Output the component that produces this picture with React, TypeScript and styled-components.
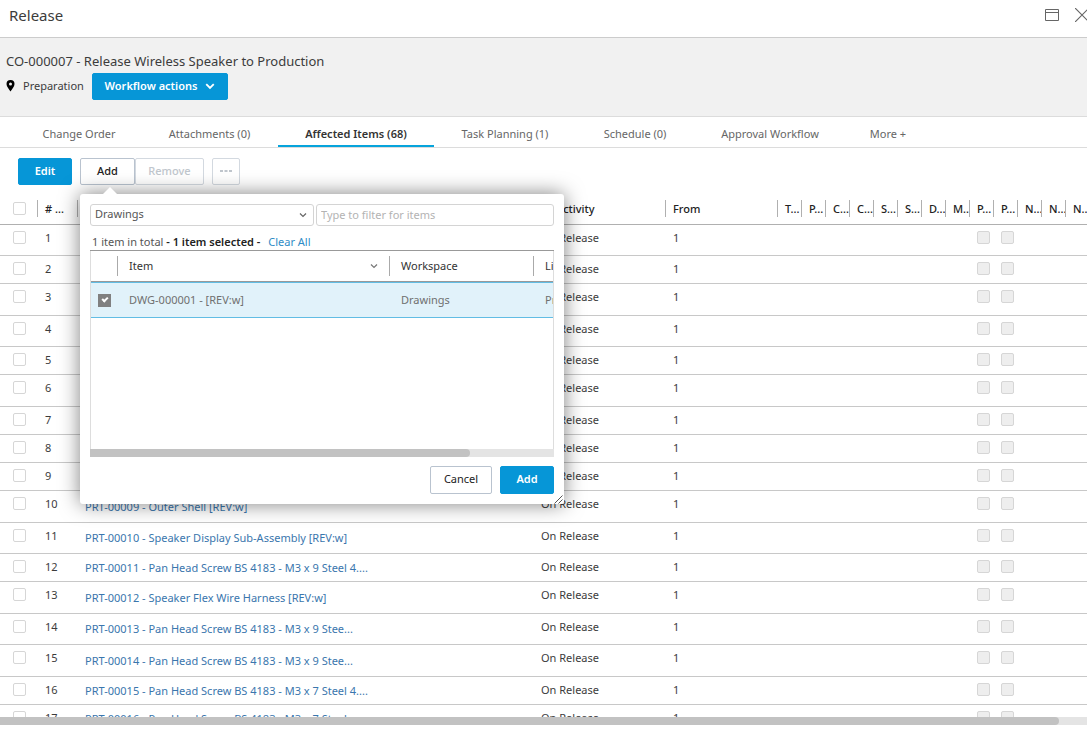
import React from "react";
import styled, { createGlobalStyle, css } from "styled-components";

const GlobalStyle = createGlobalStyle`
  *, *::before, *::after { box-sizing: border-box; }
  body {
    margin: 0;
    background: #fff;
    color: #3c3c3c;
    font-family: "Noto Sans", "Open Sans", sans-serif;
    font-size: 11px;
    line-height: 16px;
  }
  button, input, select { font: inherit; margin: 0; }
`;

const Page = styled.div`
  display: flex;
  flex-direction: column;
  height: 100vh;
  padding-bottom: 8px;
  overflow: hidden;
`;

/* ---------- title bar ---------- */

const TitleBar = styled.header`
  flex: none;
  display: flex;
  align-items: center;
  justify-content: space-between;
  height: 38px;
  padding-left: 9px;
  padding-bottom: 8px;
  border-bottom: 1px solid #ccc;
`;

const WindowTitle = styled.h1`
  margin: 0;
  font-size: 15px;
  line-height: 20px;
  font-weight: 400;
`;

const WindowControls = styled.div`
  display: flex;
  align-items: center;
  gap: 16px;
`;

const IconButton = styled.button`
  display: block;
  padding: 0;
  border: 0;
  background: none;
  color: #666;
  svg { display: block; }
`;

/* ---------- record summary ---------- */

const Summary = styled.section`
  flex: none;
  display: flex;
  flex-direction: column;
  gap: 2px;
  padding: 13px 6px 16px;
  background: #f1f1f1;
  border-bottom: 1px solid #dcdcdc;
`;

const RecordTitle = styled.h2`
  margin: 0;
  font-size: 13px;
  line-height: 20px;
  font-weight: 400;
`;

const StatusRow = styled.div`
  display: flex;
  align-items: center;
  gap: 8px;
`;

const Status = styled.span`
  display: flex;
  align-items: center;
  gap: 8px;
  min-width: 78px;
  padding-bottom: 2px;
  svg { display: block; }
`;

type Variant = "primary" | "outline" | "disabled";

const Button = styled.button<{ $variant: Variant; $width: number; $tall?: boolean }>`
  display: inline-flex;
  align-items: center;
  justify-content: center;
  gap: 8px;
  min-width: ${(p) => p.$width}px;
  height: ${(p) => (p.$tall ? 28 : 27)}px;
  padding: 0 0 2px;
  border-radius: 2px;
  border: 1px solid #b9c3cf;
  background: #fff;
  color: #222;
  ${(p) =>
    p.$variant === "primary" &&
    css`
      border-color: #0696d7;
      background: #0696d7;
      color: #fff;
      font-weight: 600;
    `}
  ${(p) =>
    p.$variant === "disabled" &&
    css`
      border-color: #d3d9e0;
      color: #c0c6cd;
    `}
`;

const StrongLabel = styled.span`
  font-weight: 500;
`;

/* ---------- tabs ---------- */

const Tabs = styled.nav`
  flex: none;
  display: grid;
  grid-template-columns: 124px 137px 156px 142px 118px 152px 84px;
  height: 31px;
  padding-left: 17px;
  border-bottom: 1px solid #dcdcdc;
`;

const Tab = styled.a<{ $active?: boolean }>`
  padding: 9px 0 3px;
  text-align: center;
  text-decoration: none;
  color: #666;
  border-bottom: 2px solid transparent;
  ${(p) =>
    p.$active &&
    css`
      color: #333;
      font-weight: 600;
      border-bottom-color: #06a4dc;
    `}
`;

/* ---------- toolbar ---------- */

const Toolbar = styled.div`
  flex: none;
  display: flex;
  gap: 8px;
  padding: 10px 18px 8px;
`;

const ButtonGroup = styled.div`
  position: relative;
  display: flex;
`;

/* ---------- picker popover ---------- */

const Popover = styled.section`
  position: absolute;
  z-index: 2;
  top: 36px;
  left: 0;
  display: flex;
  flex-direction: column;
  width: 484px;
  height: 310px;
  padding: 10px;
  border-radius: 3px;
  background: #fff;
  box-shadow: 0 0 20px rgba(0, 0, 0, 0.5);

  &::before {
    content: "";
    position: absolute;
    top: -7px;
    left: 23px;
    border: 7px solid transparent;
    border-top-width: 0;
    border-bottom-color: #fff;
  }
`;

const FilterRow = styled.div`
  display: grid;
  grid-template-columns: 224px 1fr;
  gap: 2px;
`;

const SelectBox = styled.div`
  display: grid;
  align-items: center;
  svg {
    grid-area: 1 / 1;
    justify-self: end;
    margin-right: 7px;
    color: #666;
    pointer-events: none;
  }
`;

const Select = styled.select`
  grid-area: 1 / 1;
  appearance: none;
  width: 100%;
  height: 22px;
  padding: 0 20px 2px 4px;
  border: 1px solid #d4d4d4;
  border-radius: 3px;
  background: #fff;
  color: #555;
`;

const FilterInput = styled.input`
  width: 100%;
  height: 22px;
  padding: 0 4px 2px;
  border: 1px solid #d4d4d4;
  border-radius: 3px;
  background: #fff;
  &::placeholder { color: #b3b3b3; }
`;

const SelectionInfo = styled.p`
  margin: 8px 0 0;
  padding-left: 2px;
  color: #555;
  strong {
    font-weight: 600;
    color: #222;
  }
  a { margin-left: 5px; }
`;

const Link = styled.a`
  color: #3a76ad;
  text-decoration: none;
`;

const ClearLink = styled(Link)`
  color: #2f8cc6;
`;

const PickerGrid = styled.div`
  flex: 1;
  display: flex;
  flex-direction: column;
  min-height: 0;
  border-top: 1px solid #999;
`;

const PickerViewport = styled.div`
  flex: 1;
  min-height: 0;
  overflow: hidden;
  border: solid #ddd;
  border-width: 0 1px;
`;

const PickerTable = styled.table`
  table-layout: fixed;
  width: 565px;
  border-spacing: 0;
`;

const PickerHead = styled.th<{ $first?: boolean }>`
  height: 31px;
  padding: 0;
  font-weight: 400;
  text-align: left;
  color: #333;
  border-bottom: 1px solid #999;
  > div {
    display: flex;
    align-items: center;
    justify-content: space-between;
    height: 20px;
    padding: 0 11px;
    border-left: ${(p) => (p.$first ? 0 : 1)}px solid #aaa;
  }
  svg { color: #777; }
`;

const PickerCell = styled.td`
  height: 36px;
  padding: 0 0 0 12px;
  color: #707070;
  background: #e1f2fa;
  border: solid #62bde4;
  border-width: 1px 0;
  &:first-child { padding-left: 7px; }
`;

const PickerActions = styled.div`
  display: flex;
  justify-content: flex-end;
  gap: 8px;
  margin-top: 9px;
`;

const ResizeGrip = styled.svg`
  position: absolute;
  right: 1px;
  bottom: 0;
`;

/* ---------- shared: checkbox and scrollbar ---------- */

const Checkbox = styled.input.attrs({ type: "checkbox" })`
  appearance: none;
  display: block;
  width: 13px;
  height: 13px;
  border: 1px solid #d6d6d6;
  border-radius: 2px;
  background: #fff;
  &:disabled { background: #eee; }
  &:checked {
    display: grid;
    place-items: center;
    border-color: #808080;
    border-radius: 0;
    background: #808080;
  }
  &:checked::after {
    content: "";
    width: 6px;
    height: 4px;
    margin-bottom: 2px;
    border: solid #fff;
    border-width: 0 0 2px 2px;
    transform: rotate(-45deg);
  }
`;

const ScrollTrack = styled.div`
  flex: none;
  height: 8px;
  background: #e4e4e4;
`;

const ScrollThumb = styled.div<{ $share: number }>`
  width: ${(p) => p.$share}%;
  height: 100%;
  border-radius: 0 4px 4px 0;
  background: #c2c2c2;
`;

/* ---------- affected items table ---------- */

const TableViewport = styled.div`
  flex: 1;
  min-height: 0;
  overflow: hidden;
`;

const ItemsTable = styled.table`
  table-layout: fixed;
  width: 100%;
  min-width: 1113px;
  border-spacing: 0;
`;

const HeadCell = styled.th<{ $indent?: boolean; $first?: boolean }>`
  height: 32px;
  padding: 0;
  font-weight: 500;
  text-align: left;
  white-space: nowrap;
  color: #222;
  border-bottom: 1px solid #b0b0b0;
  > div {
    display: flex;
    align-items: center;
    height: 17px;
    overflow: hidden;
    padding-left: ${(p) => (p.$first ? 13 : p.$indent ? 22 : 7)}px;
    border-left: ${(p) => (p.$first ? 0 : 1)}px solid #b0b0b0;
  }
`;

const Row = styled.tr<{ $height: number }>`
  > td { height: ${(p) => p.$height}px; }
`;

const Cell = styled.td<{ $align?: "top" | "middle"; $pad?: number }>`
  padding: ${(p) => (p.$align === "middle" ? 0 : 5)}px 0 0 ${(p) => p.$pad ?? 8}px;
  vertical-align: ${(p) => p.$align ?? "top"};
  white-space: nowrap;
  overflow: hidden;
  border-bottom: 1px solid #c8c8c8;
`;

const CheckHolder = styled.div`
  padding-top: 1px;
`;

const COLUMN_WIDTHS = [37, 40, 456, 132, 112];
const NARROW = ["T", "P", "C", "C", "S", "S", "D", "M", "P", "P", "N", "N", "N", "N"];

const ROWS: { height: number; item?: string }[] = [
  { height: 31 },
  { height: 28 },
  { height: 32 },
  { height: 31 },
  { height: 28 },
  { height: 32 },
  { height: 28 },
  { height: 28 },
  { height: 28 },
  { height: 32, item: "PRT-00009 - Outer Shell [REV:w]" },
  { height: 31, item: "PRT-00010 - Speaker Display Sub-Assembly [REV:w]" },
  { height: 28, item: "PRT-00011 - Pan Head Screw BS 4183 - M3 x 9 Steel 4...." },
  { height: 32, item: "PRT-00012 - Speaker Flex Wire Harness [REV:w]" },
  { height: 31, item: "PRT-00013 - Pan Head Screw BS 4183 - M3 x 9 Stee..." },
  { height: 32, item: "PRT-00014 - Pan Head Screw BS 4183 - M3 x 9 Stee..." },
  { height: 28, item: "PRT-00015 - Pan Head Screw BS 4183 - M3 x 7 Steel 4...." },
  { height: 28, item: "PRT-00016 - Pan Head Screw BS 4183 - M3 x 7 Steel..." },
];

const TABS = [
  "Change Order",
  "Attachments (0)",
  "Affected Items (68)",
  "Task Planning (1)",
  "Schedule (0)",
  "Approval Workflow",
  "More +",
];

const Chevron = ({ width = 8, stroke = 1 }: { width?: number; stroke?: number }) => (
  <svg width={width} height={width} viewBox="0 0 8 8" fill="none" aria-hidden="true">
    <path d="M1 2.5 4 5.5 7 2.5" stroke="currentColor" strokeWidth={stroke} />
  </svg>
);

function ItemPicker() {
  return (
    <Popover aria-label="Add items">
      <FilterRow>
        <SelectBox>
          <Select aria-label="Workspace" defaultValue="Drawings">
            <option>Drawings</option>
          </Select>
          <Chevron stroke={1.2} />
        </SelectBox>
        <FilterInput type="text" aria-label="Filter items" placeholder="Type to filter for items" />
      </FilterRow>
      <SelectionInfo>
        1 item in total <strong>- 1 item selected -</strong> <ClearLink href="#clear">Clear All</ClearLink>
      </SelectionInfo>
      <PickerGrid>
        <PickerViewport>
          <PickerTable>
            <colgroup>
              <col style={{ width: 26 }} />
              <col style={{ width: 272 }} />
              <col style={{ width: 144 }} />
              <col />
            </colgroup>
            <thead>
              <tr>
                <PickerHead $first />
                <PickerHead>
                  <div>
                    Item
                    <Chevron stroke={1.2} />
                  </div>
                </PickerHead>
                <PickerHead>
                  <div>Workspace</div>
                </PickerHead>
                <PickerHead>
                  <div>Li</div>
                </PickerHead>
              </tr>
            </thead>
            <tbody>
              <tr>
                <PickerCell>
                  <Checkbox aria-label="Select DWG-000001" defaultChecked />
                </PickerCell>
                <PickerCell>DWG-000001 - [REV:w]</PickerCell>
                <PickerCell>Drawings</PickerCell>
                <PickerCell>Pr</PickerCell>
              </tr>
            </tbody>
          </PickerTable>
        </PickerViewport>
        <ScrollTrack>
          <ScrollThumb $share={82} />
        </ScrollTrack>
      </PickerGrid>
      <PickerActions>
        <Button $variant="outline" $width={62} $tall>
          Cancel
        </Button>
        <Button $variant="primary" $width={54} $tall>
          Add
        </Button>
      </PickerActions>
      <ResizeGrip width="9" height="9" viewBox="0 0 9 9" fill="none" aria-hidden="true">
        <path d="M0.5 8.5 8.5 0.5M4.5 8.5 8.5 4.5" stroke="#555" />
      </ResizeGrip>
    </Popover>
  );
}

export default function App() {
  return (
    <Page>
      <GlobalStyle />
      <TitleBar>
        <WindowTitle>Release</WindowTitle>
        <WindowControls>
          <IconButton aria-label="Maximize">
            <svg width="14" height="12" viewBox="0 0 14 12" fill="none">
              <path d="M0.5 0.5H13.5V11.5H0.5ZM0.5 3.5H13.5" stroke="currentColor" />
            </svg>
          </IconButton>
          <IconButton aria-label="Close">
            <svg width="12" height="14" viewBox="0 0 12 14" fill="none">
              <path d="M0 0 14 14M0 14 14 0" stroke="currentColor" strokeWidth="1.2" />
            </svg>
          </IconButton>
        </WindowControls>
      </TitleBar>

      <Summary>
        <RecordTitle>CO-000007 - Release Wireless Speaker to Production</RecordTitle>
        <StatusRow>
          <Status>
            <svg width="9" height="12" viewBox="0 0 9 12" aria-hidden="true">
              <path
                fill="#000"
                fillRule="evenodd"
                d="M4.500 0A4 4 0 0 0 .5 4C.5 6.600 3 9 4.500 11.500 6 9 8.500 6.600 8.500 4A4 4 0 0 0 4.500 0ZM4.500 2.500A1.500 1.500 0 1 1 4.500 5.500 1.500 1.500 0 0 1 4.500 2.500Z"
              />
            </svg>
            Preparation
          </Status>
          <Button $variant="primary" $width={136}>
            Workflow actions
            <Chevron width={10} stroke={1.5} />
          </Button>
        </StatusRow>
      </Summary>

      <Tabs>
        {TABS.map((label, i) => (
          <Tab key={label} href="#" $active={i === 2}>
            {label}
          </Tab>
        ))}
      </Tabs>

      <Toolbar>
        <Button $variant="primary" $width={54}>
          Edit
        </Button>
        <ButtonGroup>
          <Button $variant="outline" $width={55}>
            <StrongLabel>Add</StrongLabel>
          </Button>
          <Button $variant="disabled" $width={69} disabled>
            <StrongLabel>Remove</StrongLabel>
          </Button>
          <ItemPicker />
        </ButtonGroup>
        <Button $variant="disabled" $width={28} disabled aria-label="More actions">
          <svg width="12" height="2" viewBox="0 0 12 2" aria-hidden="true">
            <path d="M0 0H3V2H0ZM4.500 0H7.500V2H4.500ZM9 0H12V2H9Z" fill="currentColor" />
          </svg>
        </Button>
      </Toolbar>

      <TableViewport>
        <ItemsTable>
          <colgroup>
            {COLUMN_WIDTHS.map((width, i) => (
              <col key={i} style={{ width }} />
            ))}
            {NARROW.map((_, i) => (
              <col key={i} style={{ width: 24 }} />
            ))}
          </colgroup>
          <thead>
            <tr>
              <HeadCell $first>
                <div>
                  <Checkbox aria-label="Select all rows" />
                </div>
              </HeadCell>
              <HeadCell>
                <div># ...</div>
              </HeadCell>
              <HeadCell>
                <div />
              </HeadCell>
              <HeadCell $indent>
                <div>Activity</div>
              </HeadCell>
              <HeadCell>
                <div>From</div>
              </HeadCell>
              {NARROW.map((letter, i) => (
                <HeadCell key={i}>
                  <div>{letter}...</div>
                </HeadCell>
              ))}
            </tr>
          </thead>
          <tbody>
            {ROWS.map((row, r) => (
              <Row key={r} $height={row.height}>
                <Cell $pad={13}>
                  <CheckHolder>
                    <Checkbox aria-label={`Select row ${r + 1}`} />
                  </CheckHolder>
                </Cell>
                <Cell>{r + 1}</Cell>
                <Cell $align="middle">{row.item && <Link href="#item">{row.item}</Link>}</Cell>
                <Cell>On Release</Cell>
                <Cell>1</Cell>
                {NARROW.map((letter, i) => (
                  <Cell key={i}>
                    {letter === "P" && i > 1 && (
                      <CheckHolder>
                        <Checkbox aria-label={`Option ${i - 7} for row ${r + 1}`} disabled />
                      </CheckHolder>
                    )}
                  </Cell>
                ))}
              </Row>
            ))}
          </tbody>
        </ItemsTable>
      </TableViewport>
      <ScrollTrack>
        <ScrollThumb $share={97.4} />
      </ScrollTrack>
    </Page>
  );
}
